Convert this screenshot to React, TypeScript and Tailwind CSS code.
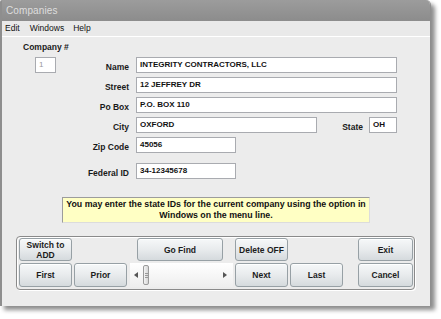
import React from "react";

const btn =
  "flex items-center justify-center text-center border border-[#97a0a5] rounded-[3px] bg-gradient-to-b from-[#f6f8f9] via-[#e8ebed] to-[#d5dadd] text-[8.5px] font-bold text-[#1c1c1c] leading-[10px] shadow-[inset_0_1px_0_rgba(255,255,255,0.9)]";

const input =
  "h-[16px] border border-[#a9abb0] bg-white text-[8px] font-bold text-[#111] pl-[3px] flex items-center leading-none";

function Label({ children }: { children: React.ReactNode }) {
  return <span className="text-[8.5px] font-bold text-[#1a1a1a] leading-none">{children}</span>;
}

function Row({ label, children, left, className = "" }: { label: string; children: React.ReactNode; left?: React.ReactNode; className?: string }) {
  return (
    <div className={`flex items-center h-[16px] ${className}`}>
      <div className="w-[127px] flex items-center">
        {left}
        <div className="flex-1 text-right">
          <Label>{label}</Label>
        </div>
      </div>
      <div className="ml-[7px] flex items-center">{children}</div>
    </div>
  );
}

export default function App() {
  return (
    <div className="w-[441px] h-[319px] bg-white font-['Liberation_Sans',Arial,sans-serif]">
      <div className="w-[431px] h-[306px] flex flex-col bg-[#ececec] rounded-tr-[5px] rounded-tl-[2px] border-l-2 border-r border-[#8e8e8e] shadow-[4px_4px_4px_rgba(0,0,0,0.45)] overflow-hidden">
        <div className="h-[21px] flex items-center pl-[4px] bg-gradient-to-b from-[#9c9c9c] to-[#8c8c8c]">
          <span className="text-[10px] text-[#dedede] tracking-[0.1px]">Companies</span>
        </div>
        <div className="h-[16px] flex items-center bg-[#e9e9e9] border-b border-white pl-[3px] text-[8.5px] text-[#111]">
          <span>Edit</span>
          <span className="ml-[10px]">Windows</span>
          <span className="ml-[9px]">Help</span>
        </div>
        <div className="flex flex-col flex-1">
          <div className="mt-[5px] ml-[21px] h-[10px] flex items-center">
            <Label>Company #</Label>
          </div>
          <Row
            className="mt-[5px]"
            label="Name"
            left={
              <div className="ml-[33px] w-[21px] h-[16px] border border-[#a9abb0] bg-white text-[8px] text-[#9a9a9a] pl-[3px] flex items-center">1</div>
            }
          >
            <div className={`${input} w-[261px]`}>INTEGRITY CONTRACTORS, LLC</div>
          </Row>
          <Row className="mt-[4px]" label="Street">
            <div className={`${input} w-[261px]`}>12 JEFFREY DR</div>
          </Row>
          <Row className="mt-[4px]" label="Po Box">
            <div className={`${input} w-[261px]`}>P.O. BOX 110</div>
          </Row>
          <Row className="mt-[4px]" label="City">
            <div className={`${input} w-[181px]`}>OXFORD</div>
            <div className="w-[46px] text-right">
              <Label>State</Label>
            </div>
            <div className={`${input} w-[28px] ml-[6px]`}>OH</div>
          </Row>
          <Row className="mt-[4px]" label="Zip Code">
            <div className={`${input} w-[100px]`}>45056</div>
          </Row>
          <Row className="mt-[10px]" label="Federal ID">
            <div className={`${input} w-[100px]`}>34-12345678</div>
          </Row>

          <div className="mt-[18px] ml-[60px] w-[308px] h-[26px] bg-[#ffffc4] border border-[#9c9c9c] border-b-[#dcdcdc] border-r-[#dcdcdc] flex flex-col items-center justify-center text-[8.8px] font-bold text-[#111] leading-[11px] whitespace-nowrap">
            <span>You may enter the state IDs for the current company using the option in</span>
            <span>Windows on the menu line.</span>
          </div>

          <div className="mt-[13px] ml-[14px] w-[399px] h-[54px] border border-[#8a8a8a] rounded-[4px] shadow-[inset_1px_1px_0_#fff,1px_1px_0_#fff] pt-[1px] pl-[2px]">
            <div className="flex h-[23px]">
              <div className={`${btn} w-[53px] h-[23px]`}>
                Switch to
                <br />
                ADD
              </div>
              <div className={`${btn} ml-[65px] w-[86px] h-[23px]`}>Go Find</div>
              <div className={`${btn} ml-[12px] w-[53px] h-[23px]`}>Delete OFF</div>
              <div className={`${btn} ml-[70px] w-[55px] h-[23px]`}>Exit</div>
            </div>
            <div className="flex h-[24px] mt-[2px]">
              <div className={`${btn} w-[53px] h-[24px]`}>First</div>
              <div className={`${btn} ml-[2px] w-[53px] h-[24px]`}>Prior</div>
              <div className="ml-[3px] w-[103px] h-[24px] bg-gradient-to-b from-[#ffffff] to-[#eeeeee] flex items-center relative">
                <svg width="4" height="6" viewBox="0 0 4 6" className="ml-[4px]">
                  <path d="M4 0 L0 3 L4 6 Z" fill="#555" />
                </svg>
                <div className="ml-[5px] w-[6px] h-[20px] rounded-[2px] border border-[#9a9a9a] bg-gradient-to-r from-[#f4f4f4] to-[#d6d6d6] flex flex-col items-center justify-center gap-[1px]">
                  <div className="w-[3px] h-[1px] bg-[#999]" />
                  <div className="w-[3px] h-[1px] bg-[#999]" />
                  <div className="w-[3px] h-[1px] bg-[#999]" />
                </div>
                <div className="flex-1" />
                <svg width="4" height="6" viewBox="0 0 4 6" className="mr-[6px]">
                  <path d="M0 0 L4 3 L0 6 Z" fill="#555" />
                </svg>
              </div>
              <div className={`${btn} ml-[2px] w-[53px] h-[24px]`}>Next</div>
              <div className={`${btn} ml-[2px] w-[53px] h-[24px]`}>Last</div>
              <div className={`${btn} ml-[15px] w-[55px] h-[24px]`}>Cancel</div>
            </div>
          </div>
        </div>
      </div>
    </div>
  );
}
